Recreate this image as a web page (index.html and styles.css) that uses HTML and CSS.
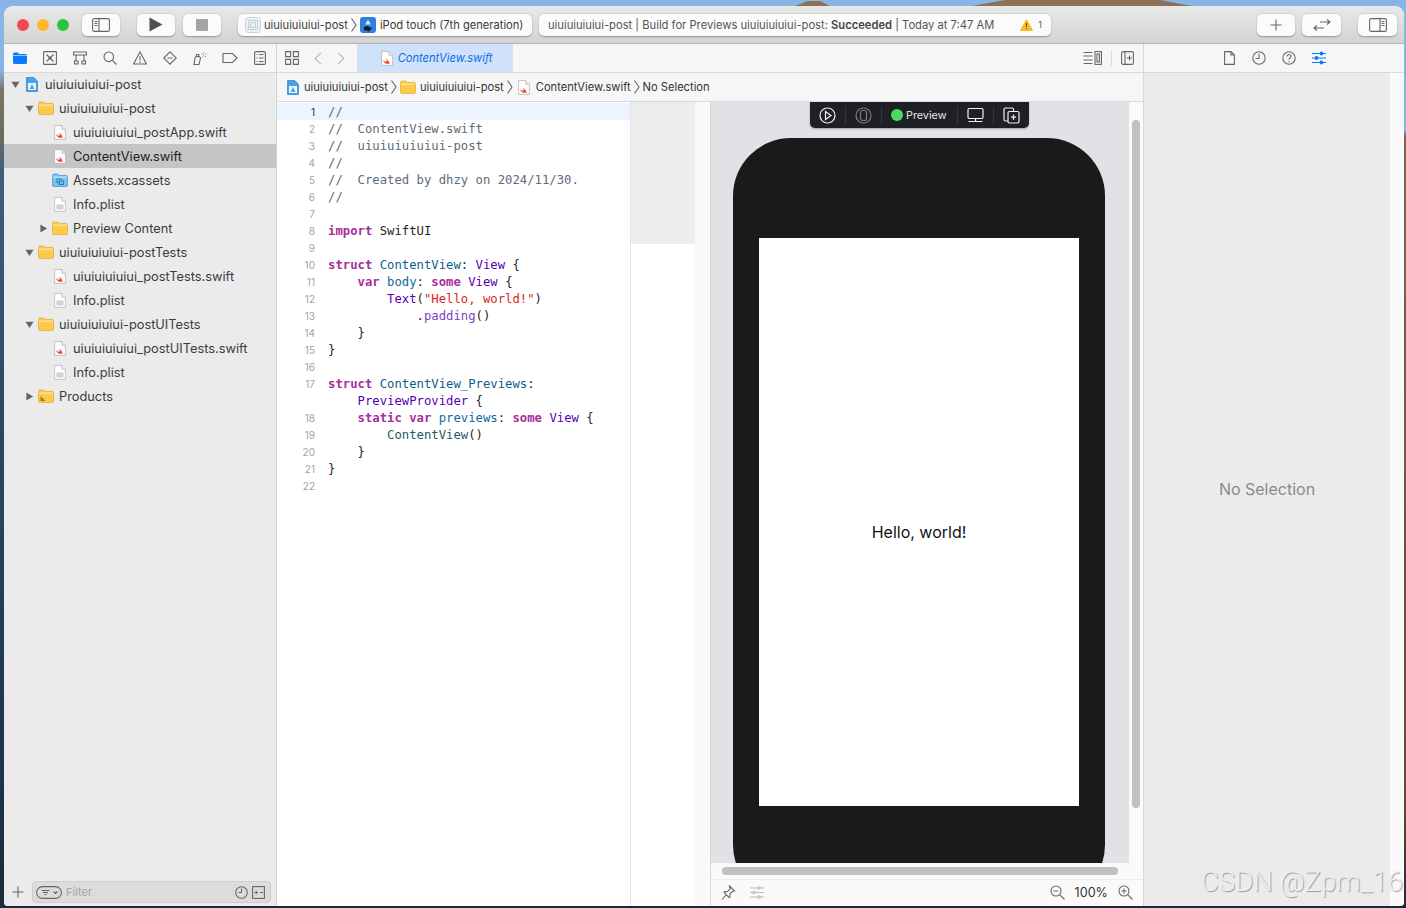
FILE: index.html
```html
<!DOCTYPE html>
<html lang="en">
<head>
    <meta charset="UTF-8">
    <title>ContentView.swift</title>
    <link rel="stylesheet" href="styles.css">
</head>
<body>
    <svg class="defs" width="0" height="0" aria-hidden="true">
        <symbol id="folder" viewBox="0 0 16 14">
            <path d="M.5 2.500A1.500 1.500 0 0 1 2 1h3.600l1.400 1.400h7A1.500 1.500 0 0 1 15.500 4v8.200a1.300 1.300 0 0 1-1.300 1.300H1.800a1.300 1.300 0 0 1-1.300-1.300z" fill="#fdcb4a" stroke="#e3a92e" stroke-width=".7"/>
            <path d="M1 3.400h14V5H1z" fill="#fbe08c"/>
        </symbol>
        <symbol id="folder-products" viewBox="0 0 16 14">
            <use href="#folder"/>
            <path d="M2.500 12V7l5 5z" fill="#a8761c"/>
        </symbol>
        <symbol id="folder-assets" viewBox="0 0 16 14">
            <path d="M.5 2.500A1.500 1.500 0 0 1 2 1h3.600l1.400 1.400h7A1.500 1.500 0 0 1 15.500 4v8.200a1.300 1.300 0 0 1-1.300 1.300H1.800a1.300 1.300 0 0 1-1.300-1.300z" fill="#74c3ee" stroke="#3d94cf" stroke-width=".7"/>
            <path d="M1 3.400h14V5H1z" fill="#b5e0f6"/>
            <rect x="5" y="6" width="4" height="3.600" fill="none" stroke="#1b6fb5" stroke-width=".8"/>
            <rect x="7.400" y="8" width="4" height="3.600" fill="#74c3ee" stroke="#1b6fb5" stroke-width=".8"/>
        </symbol>
        <symbol id="file-swift" viewBox="0 0 12 15">
            <path d="M.6.6h7.200l3.600 3.600v10.200H.6z" fill="#fff" stroke="#b5b5b5" stroke-width=".8"/>
            <path d="M7.800.6v3.600h3.600" fill="#eee" stroke="#b5b5b5" stroke-width=".8"/>
            <path d="M2 9.200c1.600 1.200 3 1.900 3.900 2-.7-.9-1.700-2-2.200-2.700 1.200 1 2.400 1.800 3 2.100C6 9.600 5.500 8.600 5 7.800c1.500 1 3 2.400 3.300 4 .5.300.8.700.9 1.100-.6-.5-1.100-.5-1.500-.3-1.500.6-4.400.2-5.700-3.400z" fill="#ee3a2b"/>
        </symbol>
        <symbol id="file-plist" viewBox="0 0 12 15">
            <path d="M.6.6h7.200l3.600 3.600v10.200H.6z" fill="#fff" stroke="#b9b9b9" stroke-width=".8"/>
            <path d="M7.800.6v3.600h3.600" fill="#eee" stroke="#b9b9b9" stroke-width=".8"/>
            <path d="M3 8h6v4H3zM3 10h6M5 8v4M7 8v4" fill="none" stroke="#b3b3b3" stroke-width=".7"/>
        </symbol>
        <symbol id="project" viewBox="0 0 12 15">
            <path d="M.6.6h7.200l3.600 3.600v10.200H.6z" fill="#4aa2ec" stroke="#2a7fd0" stroke-width=".8"/>
            <path d="M2 6h8v7H2z" fill="#e9f4fe"/>
            <path d="M6 7l2.400 5H3.600z" fill="#4aa2ec"/>
        </symbol>
        <symbol id="tri-down" viewBox="0 0 10 10"><path d="M.5 2h9L5 9z" fill="#666"/></symbol>
        <symbol id="tri-right" viewBox="0 0 10 10"><path d="M1.500.5v9L9 5z" fill="#666"/></symbol>
    </svg>

    <svg class="peaks" width="1406" height="6" viewBox="0 0 1406 6" aria-hidden="true">
        <path d="M795 6 808 1h12l10 5zM972 6l33-6h155l32 6z" fill="#8d7155"/>
    </svg>

    <div class="window">
        <header class="toolbar">
            <span class="light light-red"></span>
            <span class="light light-yellow"></span>
            <span class="light light-green"></span>

            <button class="tool-btn btn-sidebar" aria-label="Navigator">
                <svg width="18" height="14" viewBox="0 0 18 14" class="ico"><rect x=".6" y=".6" width="16.800" height="12.800" rx="1.500"/><path d="M7 .6v12.800M2.500 3.500h3M2.500 5.500h3M2.500 7.500h3"/></svg>
            </button>
            <button class="tool-btn btn-play" aria-label="Run">
                <svg width="14" height="15" viewBox="0 0 14 15"><path d="M.5.500 13.500 7.500.5 14.500z" fill="#4f4f4f"/></svg>
            </button>
            <button class="tool-btn btn-stop" aria-label="Stop"><span class="stop-square"></span></button>

            <div class="tool-box scheme">
                <svg width="16" height="16" viewBox="0 0 16 16"><rect x=".5" y=".5" width="15" height="15" rx="3" fill="#e9f1f2" stroke="#c9d4d6"/><rect x="3.500" y="3.500" width="9" height="9" fill="none" stroke="#c2d3d6"/><rect x="5.500" y="5.500" width="5" height="5" fill="none" stroke="#c2d3d6"/></svg>
                <span class="scheme-name">uiuiuiuiuiui-post</span>
                <svg class="ico chev" width="6" height="14" viewBox="0 0 6 14"><path d="M.5.500 5 7 .5 13.500"/></svg>
                <svg width="16" height="16" viewBox="0 0 16 16"><rect width="16" height="16" rx="3" fill="#2f7fe0"/><path d="M8 2.500l3 5H5z" fill="#cfe4fb"/><path d="M7 9l5 2-3 3.500-4-1.500-1 1V10z" fill="#1a1a1a"/></svg>
                <span class="scheme-device">iPod touch (7th generation)</span>
            </div>

            <div class="tool-box activity">
                <span class="activity-text">uiuiuiuiuiui-post | Build for Previews uiuiuiuiuiui-post: <b>Succeeded</b> | Today at 7:47 AM</span>
                <svg width="13" height="12" viewBox="0 0 13 12"><path d="M6.500.5 12.500 11.500H.5z" fill="#f6bd2a" stroke="#f6bd2a" stroke-linejoin="round"/><path d="M6.500 4v4M6.500 9.300v1" stroke="#6b4c00" stroke-width="1.100"/></svg>
                <span class="warn-count">1</span>
            </div>

            <button class="tool-btn btn-add" aria-label="Library">
                <svg class="ico" width="12" height="12" viewBox="0 0 12 12"><path d="M6 .5v11M.5 6h11"/></svg>
            </button>
            <button class="tool-btn btn-review" aria-label="Code review">
                <svg class="ico" width="18" height="14" viewBox="0 0 18 14"><path d="M1 10h10M4 7.500 1 10l3 2.500M7 4h10M14 1.500 17 4l-3 2.500"/></svg>
            </button>
            <button class="tool-btn btn-inspector" aria-label="Inspectors">
                <svg class="ico" width="18" height="14" viewBox="0 0 18 14"><rect x=".6" y=".6" width="16.800" height="12.800" rx="1.500"/><path d="M11 .6v12.800M12.500 3.500h3M12.500 5.500h3M12.500 7.500h3"/></svg>
            </button>
        </header>

        <div class="workspace">
            <aside class="navigator">
                <div class="nav-tabs">
                    <svg width="14" height="12" viewBox="0 0 14 12"><path d="M0 2a1.500 1.500 0 0 1 1.500-1.500h3.300L6 2h6.500A1.500 1.500 0 0 1 14 3.500v7a1.500 1.500 0 0 1-1.500 1.500h-11A1.500 1.500 0 0 1 0 10.500z" fill="#0a7aff"/><path d="M0 3.500h14" stroke="#f6f6f6" stroke-width=".6"/></svg>
                    <svg class="ico" width="14" height="14" viewBox="0 0 14 14"><rect x=".6" y=".6" width="12.800" height="12.800" rx=".5"/><path d="M3.500 3.500l7 7M10.500 3.500l-7 7"/><circle cx="7" cy="7" r="1" fill="#666"/></svg>
                    <svg class="ico" width="14" height="14" viewBox="0 0 14 14"><path d="M.6 1h12.800v3H.6zM3 4v6M11 4v6M1.500 10h3.500v3H1.500zM9 10h3.500v3H9z"/></svg>
                    <svg class="ico" width="14" height="14" viewBox="0 0 14 14"><circle cx="5.800" cy="5.800" r="4.800"/><path d="M9.300 9.300 13.500 13.500"/></svg>
                    <svg class="ico" width="14" height="14" viewBox="0 0 14 14"><path d="M7 1 13.500 13H.5zM7 5v4.500M7 10.500V12"/></svg>
                    <svg class="ico" width="14" height="14" viewBox="0 0 14 14"><path d="M7 .8 13.200 7 7 13.200.8 7zM4.500 7h5"/></svg>
                    <svg class="ico" width="14" height="14" viewBox="0 0 14 14"><path d="M3 5.500h3.500l1 1.500-1.500 6.500H1L2 7zM3.400 3.500h2.500v2H3.400z"/><path d="M8.500 3h.8M10.500 1.500h.8M10 4h.8M12.500 3h.8M9.500 6h.8M12 5.500h.8" stroke-width="1"/></svg>
                    <svg class="ico" width="16" height="14" viewBox="0 0 16 14"><path d="M1 2.500h9.500L15 7l-4.500 4.500H1z"/></svg>
                    <svg class="ico" width="12" height="14" viewBox="0 0 12 14"><rect x=".6" y=".6" width="10.800" height="12.800" rx="1.200"/><path d="M2.500 3.500h1M5 3.500h4.500M2.500 7h1M5 7h4.500M2.500 10.500h1M5 10.500h4.500"/></svg>
                </div>

                <div class="tree">
                    <div class="row depth-0"><svg class="tri"><use href="#tri-down"/></svg><svg class="file"><use href="#project"/></svg><span>uiuiuiuiuiui-post</span></div>
                    <div class="row depth-1"><svg class="tri"><use href="#tri-down"/></svg><svg class="dir"><use href="#folder"/></svg><span>uiuiuiuiuiui-post</span></div>
                    <div class="row depth-2"><i class="tri"></i><svg class="file"><use href="#file-swift"/></svg><span>uiuiuiuiuiui_postApp.swift</span></div>
                    <div class="row depth-2 selected"><i class="tri"></i><svg class="file"><use href="#file-swift"/></svg><span>ContentView.swift</span></div>
                    <div class="row depth-2"><i class="tri"></i><svg class="dir"><use href="#folder-assets"/></svg><span>Assets.xcassets</span></div>
                    <div class="row depth-2"><i class="tri"></i><svg class="file"><use href="#file-plist"/></svg><span>Info.plist</span></div>
                    <div class="row depth-2"><svg class="tri"><use href="#tri-right"/></svg><svg class="dir"><use href="#folder"/></svg><span>Preview Content</span></div>
                    <div class="row depth-1"><svg class="tri"><use href="#tri-down"/></svg><svg class="dir"><use href="#folder"/></svg><span>uiuiuiuiuiui-postTests</span></div>
                    <div class="row depth-2"><i class="tri"></i><svg class="file"><use href="#file-swift"/></svg><span>uiuiuiuiuiui_postTests.swift</span></div>
                    <div class="row depth-2"><i class="tri"></i><svg class="file"><use href="#file-plist"/></svg><span>Info.plist</span></div>
                    <div class="row depth-1"><svg class="tri"><use href="#tri-down"/></svg><svg class="dir"><use href="#folder"/></svg><span>uiuiuiuiuiui-postUITests</span></div>
                    <div class="row depth-2"><i class="tri"></i><svg class="file"><use href="#file-swift"/></svg><span>uiuiuiuiuiui_postUITests.swift</span></div>
                    <div class="row depth-2"><i class="tri"></i><svg class="file"><use href="#file-plist"/></svg><span>Info.plist</span></div>
                    <div class="row depth-1"><svg class="tri"><use href="#tri-right"/></svg><svg class="dir"><use href="#folder-products"/></svg><span>Products</span></div>
                </div>

                <div class="filter-bar">
                    <svg class="ico filter-add" width="12" height="12" viewBox="0 0 12 12"><path d="M6 .5v11M.5 6h11"/></svg>
                    <div class="filter-field">
                        <svg class="ico" width="26" height="13" viewBox="0 0 26 13"><rect x=".6" y=".6" width="24.800" height="11.800" rx="5.900"/><path d="M5.500 4.500h8M7 6.500h5M8.500 8.500h2M17.500 5.500 19.500 7.500 21.500 5.500"/></svg>
                        <span class="filter-label">Filter</span>
                        <svg class="ico" width="13" height="13" viewBox="0 0 13 13"><circle cx="6.500" cy="6.500" r="5.800"/><path d="M6.500 2.500v4H3.500"/></svg>
                        <svg class="ico" width="13" height="13" viewBox="0 0 13 13"><rect x=".6" y=".6" width="11.800" height="11.800"/><path d="M2.500 6.500h3.500M4.200 4.800v3.400M8 6.500h3"/></svg>
                    </div>
                </div>
            </aside>

            <main class="center">
                <div class="tab-bar">
                    <svg class="ico" width="14" height="14" viewBox="0 0 14 14"><path d="M.6.6h5v5h-5zM8.400.6h5v5h-5zM.6 8.400h5v5h-5zM8.400 8.400h5v5h-5z"/></svg>
                    <svg class="ico faint tab-back" width="8" height="13" viewBox="0 0 8 13"><path d="M7 .8 1 6.500 7 12.200"/></svg>
                    <svg class="ico faint tab-forward" width="8" height="13" viewBox="0 0 8 13"><path d="M1 .8 7 6.500 1 12.200"/></svg>
                    <div class="tab">
                        <svg class="file"><use href="#file-swift"/></svg>
                        <span>ContentView.swift</span>
                    </div>
                    <svg class="ico tab-right" width="19" height="14" viewBox="0 0 19 14"><path d="M.5 1.500h9M.5 5h9M.5 9h9M.5 12.500h9"/><rect x="12" y=".6" width="6.400" height="12.800"/><rect x="14" y="3" width="2.400" height="8"/></svg>
                    <span class="tab-sep"></span>
                    <svg class="ico" width="13" height="14" viewBox="0 0 13 14"><rect x=".6" y=".6" width="11.800" height="12.800" rx="1.500"/><path d="M4 .6v12.800M6 7h5M8.500 4.500v5"/></svg>
                </div>

                <div class="jump-bar">
                    <svg class="file"><use href="#project"/></svg>
                    <span class="crumb">uiuiuiuiuiui-post</span>
                    <svg class="ico chev" width="6" height="14" viewBox="0 0 6 14"><path d="M.5.500 5 7 .5 13.500"/></svg>
                    <svg class="dir"><use href="#folder"/></svg>
                    <span class="crumb crumb-dir">uiuiuiuiuiui-post</span>
                    <svg class="ico chev" width="6" height="14" viewBox="0 0 6 14"><path d="M.5.500 5 7 .5 13.500"/></svg>
                    <svg class="file"><use href="#file-swift"/></svg>
                    <span class="crumb crumb-file">ContentView.swift</span>
                    <svg class="ico chev" width="6" height="14" viewBox="0 0 6 14"><path d="M.5.500 5 7 .5 13.500"/></svg>
                    <span class="crumb">No Selection</span>
                </div>

                <div class="split">
                    <section class="code">
                        <div class="line active"><span class="ln">1</span><span class="cm">//</span></div>
                        <div class="line"><span class="ln">2</span><span class="cm">//  ContentView.swift</span></div>
                        <div class="line"><span class="ln">3</span><span class="cm">//  uiuiuiuiuiui-post</span></div>
                        <div class="line"><span class="ln">4</span><span class="cm">//</span></div>
                        <div class="line"><span class="ln">5</span><span class="cm">//  Created by dhzy on 2024/11/30.</span></div>
                        <div class="line"><span class="ln">6</span><span class="cm">//</span></div>
                        <div class="line"><span class="ln">7</span></div>
                        <div class="line"><span class="ln">8</span><span><span class="kw">import</span> SwiftUI</span></div>
                        <div class="line"><span class="ln">9</span></div>
                        <div class="line"><span class="ln">10</span><span><span class="kw">struct</span> <span class="decl">ContentView</span>: <span class="ty">View</span> {</span></div>
                        <div class="line"><span class="ln">11</span><span>    <span class="kw">var</span> <span class="decl2">body</span>: <span class="kw">some</span> <span class="ty">View</span> {</span></div>
                        <div class="line"><span class="ln">12</span><span>        <span class="ty">Text</span>(<span class="str">"Hello, world!"</span>)</span></div>
                        <div class="line"><span class="ln">13</span><span>            .<span class="fn">padding</span>()</span></div>
                        <div class="line"><span class="ln">14</span><span>    }</span></div>
                        <div class="line"><span class="ln">15</span><span>}</span></div>
                        <div class="line"><span class="ln">16</span></div>
                        <div class="line"><span class="ln">17</span><span><span class="kw">struct</span> <span class="decl">ContentView_Previews</span>:</span></div>
                        <div class="line"><span class="ln"></span><span>    <span class="ty">PreviewProvider</span> {</span></div>
                        <div class="line"><span class="ln">18</span><span>    <span class="kw">static</span> <span class="kw">var</span> <span class="decl2">previews</span>: <span class="kw">some</span> <span class="ty">View</span> {</span></div>
                        <div class="line"><span class="ln">19</span><span>        <span class="call">ContentView</span>()</span></div>
                        <div class="line"><span class="ln">20</span><span>    }</span></div>
                        <div class="line"><span class="ln">21</span><span>}</span></div>
                        <div class="line"><span class="ln">22</span></div>
                    </section>

                    <div class="minimap"><div class="minimap-view"></div></div>

                    <section class="preview">
                        <div class="preview-main">
                            <div class="canvas">
                                <div class="preview-pill">
                                    <svg class="pill-ico" width="17" height="17" viewBox="0 0 17 17"><circle cx="8.500" cy="8.500" r="7.500"/><path d="M6.500 4.500 12 8.500 6.500 12.500z"/></svg>
                                    <span class="pill-sep"></span>
                                    <svg class="pill-ico dim" width="17" height="17" viewBox="0 0 17 17"><circle cx="8.500" cy="8.500" r="7.500"/><rect x="5.500" y="3.500" width="6" height="10" rx="2"/></svg>
                                    <span class="pill-sep"></span>
                                    <span class="pill-dot"></span>
                                    <span class="pill-label">Preview</span>
                                    <span class="pill-sep"></span>
                                    <svg class="pill-ico" width="17" height="17" viewBox="0 0 17 17"><rect x="1" y="1.500" width="15" height="10" rx="1.200"/><path d="M8.500 11.500v3M1.500 14.500h14"/></svg>
                                    <span class="pill-sep"></span>
                                    <svg class="pill-ico" width="17" height="17" viewBox="0 0 17 17"><rect x="1" y="1" width="9.500" height="13" rx="1.500"/><rect x="5" y="4.500" width="11" height="11.500" rx="1.500" fill="#1e2025"/><path d="M10.500 7.500v5.500M8 10.200h5"/></svg>
                                </div>
                                <div class="device">
                                    <div class="screen">Hello, world!</div>
                                </div>
                            </div>
                            <div class="v-track"><div class="v-thumb"></div></div>
                        </div>
                        <div class="h-track"><div class="h-thumb"></div></div>
                        <div class="preview-footer">
                            <svg class="ico" width="15" height="15" viewBox="0 0 15 15"><path d="M8.500 1l5 5-2.200.5-2.500 2.500.2 3-1 .5L3 7.500l.5-1 3 .2L9 4zM5 10l-4 4.500"/></svg>
                            <svg class="ico faint sliders" width="14" height="13" viewBox="0 0 14 13"><path d="M0 2h14M0 6.500h14M0 11h14"/><circle cx="9" cy="2" r="1.200" fill="#fafafa"/><circle cx="4" cy="6.500" r="1.200" fill="#fafafa"/><circle cx="9" cy="11" r="1.200" fill="#fafafa"/></svg>
                            <svg class="ico zoom-out" width="15" height="15" viewBox="0 0 15 15"><circle cx="6" cy="6" r="5"/><path d="M9.700 9.700 14.500 14.500M3.500 6h5"/></svg>
                            <span class="zoom-value">100%</span>
                            <svg class="ico" width="15" height="15" viewBox="0 0 15 15"><circle cx="6" cy="6" r="5"/><path d="M9.700 9.700 14.500 14.500M3.500 6h5M6 3.500v5"/></svg>
                        </div>
                    </section>
                </div>
            </main>

            <aside class="inspector">
                <div class="inspector-tabs">
                    <svg class="ico" width="11" height="14" viewBox="0 0 11 14"><path d="M.6.6h6.400l3.400 3.400v9.400H.6zM7 .6V4h3.400"/></svg>
                    <svg class="ico" width="14" height="14" viewBox="0 0 14 14"><circle cx="7" cy="7" r="6.200"/><path d="M7 2.800V7.500H3.500"/></svg>
                    <svg class="ico" width="14" height="14" viewBox="0 0 14 14"><circle cx="7" cy="7" r="6.200"/><path d="M5 5.500a2 2 0 1 1 3 1.700c-.7.400-1 .8-1 1.600M7 10v1.200"/></svg>
                    <svg class="ico-blue" width="14" height="14" viewBox="0 0 14 14"><path d="M0 2.500h14M0 7h14M0 11.500h14"/><circle cx="9.500" cy="2.500" r="1.300"/><circle cx="4.500" cy="7" r="1.300"/><circle cx="9.500" cy="11.500" r="1.300"/></svg>
                </div>
                <div class="inspector-body">
                    <div class="inspector-pane">No Selection</div>
                    <div class="inspector-strip"></div>
                </div>
            </aside>
        </div>
    </div>

    <div class="watermark">CSDN @Zpm_16</div>
</body>
</html>
```

FILE: styles.css
```css
* {
    margin: 0;
    padding: 0;
    box-sizing: border-box;
}

html, body {
    width: 1406px;
    height: 908px;
    overflow: hidden;
}

body {
    position: relative;
    padding: 6px 2px 2px 4px;
    font-family: Inter, Roboto, 'Liberation Sans', sans-serif;
    color: #3a3a3a;
    background:
        linear-gradient(180deg, #86b5e6 130px, #7a6650 136px, #5b4c3c 800px, #26282c 100%) right / 2px 100% no-repeat,
        linear-gradient(180deg, #86b5e6 0, #86b5e6 70px, #7c7466 90px, #6d6a60 140px, #3f5f80 170px, #2b4a68 400px, #1c3248 800px, #1c2a38 100%);
}

.defs {
    position: absolute;
}

.peaks {
    position: absolute;
    top: 0;
    left: 0;
}

svg {
    display: block;
    flex-shrink: 0;
}

.ico {
    fill: none;
    stroke: #666;
    stroke-width: 1.1;
}

.ico.faint {
    stroke: #b8b8b8;
}

.ico-blue {
    fill: #0a7aff;
    stroke: #0a7aff;
    stroke-width: 1.2;
}

.file {
    width: 12px;
    height: 15px;
}

.dir {
    width: 16px;
    height: 14px;
}

.window {
    position: relative;
    display: flex;
    flex-direction: column;
    width: 1400px;
    height: 900px;
    border-radius: 9px 9px 4px 4px;
    overflow: hidden;
    background: #f6f6f6;
}

/* toolbar */
.toolbar {
    display: flex;
    align-items: center;
    flex-shrink: 0;
    height: 38px;
    padding: 0 7px 0 13px;
    background: linear-gradient(180deg, #e9e9e9, #d3d3d3);
    border-bottom: 1px solid #b4b4b4;
}

.light {
    width: 12px;
    height: 12px;
    margin-right: 8px;
    border-radius: 50%;
}

.light-red { background: #f4474e; }
.light-yellow { background: #fcb72a; }
.light-green { background: #2ac43f; }

.tool-btn,
.tool-box {
    display: flex;
    align-items: center;
    height: 22px;
    border: none;
    border-radius: 5px;
    background: #fbfbfb;
    box-shadow: 0 .5px 1.5px rgba(0, 0, 0, .3);
}

.tool-btn {
    justify-content: center;
    width: 38px;
}

.btn-sidebar { margin-left: 5px; }
.btn-play { margin-left: 17px; }
.btn-stop { margin-left: 8px; }

.stop-square {
    width: 12px;
    height: 12px;
    border-radius: 1px;
    background: #a3a3a3;
}

.scheme {
    width: 294px;
    margin-left: 17px;
    padding-left: 7px;
    font-size: 11.15px;
}

.scheme-name { margin-left: 3px; }
.scheme .chev { margin: 0 3px 0 3px; }
.scheme-device { margin-left: 4px; }

.activity {
    width: 512px;
    margin-left: 7px;
    padding: 0 9px 0 9px;
    font-size: 11.2px;
    color: #555;
}

.activity b {
    font-weight: 600;
    color: #444;
}

.activity-text {
    flex: 1;
}

.warn-count {
    margin-left: 5px;
    font-size: 9px;
}

.btn-add { margin-left: 206px; }
.btn-review { margin-left: 7px; width: 39px; }
.btn-inspector { margin-left: 17px; width: 39px; }

/* left column */
.workspace {
    display: flex;
    flex: 1;
    min-height: 0;
}

.navigator {
    display: flex;
    flex-direction: column;
    width: 273px;
    background: #ebebeb;
    border-right: 1px solid #d4d4d4;
}

.nav-tabs {
    display: grid;
    grid-template-columns: repeat(9, 30px);
    justify-items: center;
    align-items: center;
    height: 29px;
    padding-left: 1px;
    background: #f6f6f6;
    border-bottom: 1px solid #d9d9d9;
}

.tree {
    flex: 1;
    margin-top: -1px;
}

.row {
    display: flex;
    align-items: center;
    height: 24px;
    font-size: 12.8px;
    color: #3c3c3c;
    white-space: nowrap;
}

.row.selected {
    background: #c5c5c5;
    color: #222;
}

.depth-0 { padding-left: 7px; }
.depth-1 { padding-left: 21px; }
.depth-2 { padding-left: 35px; }

.tri {
    display: block;
    width: 9px;
    height: 9px;
    flex-shrink: 0;
}

.row .file {
    margin-left: 6px;
    margin-right: 7px;
}

.row .dir {
    margin-left: 4px;
    margin-right: 5px;
}

.filter-bar {
    display: flex;
    align-items: flex-end;
    gap: 8px;
    height: 28px;
    padding: 0 5px 3px 8px;
    flex-shrink: 0;
}

.filter-add {
    margin-bottom: 5px;
}

.filter-field {
    display: flex;
    align-items: center;
    flex: 1;
    height: 22px;
    padding: 0 5px 0 3px;
    background: #dcdcdc;
    border: 1px solid #cdcdcd;
    border-radius: 4px;
}

.filter-label {
    flex: 1;
    margin-left: 4px;
    font-size: 11px;
    color: #a6a6a6;
}

.filter-field svg:last-child {
    margin-left: 4px;
}

/* centre column */
.center {
    display: flex;
    flex-direction: column;
    width: 867px;
    border-right: 1px solid #d9d9d9;
}

.tab-bar {
    display: flex;
    align-items: center;
    height: 29px;
    flex-shrink: 0;
    padding-left: 8px;
    border-bottom: 1px solid #d9d9d9;
}

.tab-back { margin-left: 15px; }
.tab-forward { margin-left: 15px; }

.tab {
    display: flex;
    align-items: center;
    justify-content: center;
    gap: 5px;
    align-self: stretch;
    width: 156px;
    margin-left: 12px;
    padding-left: 3px;
    background: #cfe2fa;
    font-size: 11.15px;
    font-style: italic;
    color: #0a6fe8;
}

.tab-right { margin-left: 570px; }

.tab-sep {
    width: 1px;
    height: 16px;
    margin: 0 9px;
    background: #dcdcdc;
}

.jump-bar {
    display: flex;
    align-items: center;
    height: 29px;
    flex-shrink: 0;
    padding-left: 10px;
    font-size: 11.15px;
    color: #333;
    border-bottom: 1px solid #d9d9d9;
}

.crumb {
    margin-left: 5px;
}

.crumb-dir {
    margin-left: 4px;
}

.crumb-file {
    margin-left: 6px;
}

.jump-bar .chev {
    margin: 0 3px 0 3px;
}

.jump-bar .chev + .file {
    margin-left: 2px;
}

.jump-bar .chev + .crumb {
    margin-left: 0;
}

.split {
    display: flex;
    flex: 1;
    min-height: 0;
    background: #fafafa;
}

.code {
    width: 354px;
    padding-top: 1px;
    background: #fff;
    border-right: 1px solid #e4e4e4;
    font-family: 'DejaVu Sans Mono', 'Liberation Mono', monospace;
    font-size: 12.25px;
    color: #262626;
}

.line {
    display: flex;
    height: 17px;
    line-height: 19px;
    white-space: pre;
}

.line.active {
    background: #ecf5ff;
}

.line.active .ln {
    color: #333;
}

.ln {
    width: 38px;
    margin-right: 13px;
    flex-shrink: 0;
    font-family: Inter, Roboto, sans-serif;
    font-size: 10px;
    text-align: right;
    color: #a3a3a3;
}

.cm { color: #5d6c79; }
.kw { color: #a82e9c; font-weight: 700; }
.decl { color: #0b5e8a; }
.decl2 { color: #0f68a0; }
.ty { color: #5500b5; }
.str { color: #d8261c; }
.fn { color: #7d3fc4; }
.call { color: #1f5a60; }

.minimap {
    width: 64px;
    background: #fff;
}

.minimap-view {
    height: 142px;
    background: #ededed;
    border-top: 2px solid #e4edf6;
}

.preview {
    display: flex;
    flex-direction: column;
    flex: 1;
    min-width: 0;
    margin-left: 15px;
    background: #fafafa;
    border-left: 1px solid #d6d6d6;
}

.preview-main {
    display: flex;
    flex: 1;
    min-height: 0;
}

.canvas {
    position: relative;
    flex: 1;
    padding-top: 36px;
    overflow: hidden;
    background: #e1e2e6;
}

.preview-pill {
    position: absolute;
    top: 0;
    left: 99px;
    display: flex;
    align-items: center;
    gap: 9px;
    width: 219px;
    height: 26px;
    padding: 0 9px;
    background: #1e2025;
    border-radius: 0 0 5px 5px;
    box-shadow: 0 1px 2px rgba(0, 0, 0, .3);
}

.pill-ico {
    fill: none;
    stroke: #f0f0f0;
    stroke-width: 1.2;
}

.pill-ico.dim {
    stroke: #77797d;
}

.pill-sep {
    width: 1px;
    height: 18px;
    background: #34363b;
    flex-shrink: 0;
}

.pill-dot {
    width: 12px;
    height: 12px;
    border-radius: 50%;
    background: #4cd964;
    flex-shrink: 0;
}

.pill-label {
    margin: 0 2px 0 -6px;
    font-size: 10.8px;
    color: #e6e6e6;
}

.device {
    width: 372px;
    height: 765px;
    margin-left: 22px;
    padding: 100px 26px 0;
    background: #1a1a1a;
    border-radius: 58px;
}

.screen {
    display: flex;
    align-items: center;
    justify-content: center;
    height: 568px;
    padding-top: 20px;
    background: #fff;
    font-size: 16px;
    color: #111;
}

.v-track {
    width: 14px;
    padding: 18px 3px 0;
}

.v-thumb {
    height: 688px;
    border-radius: 4px;
    background: #c1c1c1;
}

.h-track {
    height: 17px;
    flex-shrink: 0;
    padding: 4px 25px 0 11px;
    border-bottom: 1px solid #ececec;
}

.h-thumb {
    height: 8px;
    border-radius: 4px;
    background: #c1c1c1;
}

.preview-footer {
    display: flex;
    align-items: center;
    height: 26px;
    flex-shrink: 0;
    padding: 0 10px 1px;
    gap: 10px;
    font-size: 12.6px;
}

.sliders {
    margin-left: 4px;
}

.zoom-out {
    margin-left: auto;
}

.zoom-value {
    color: #333;
}

/* right column */
.inspector {
    display: flex;
    flex-direction: column;
    flex: 1;
}

.inspector-tabs {
    display: grid;
    grid-template-columns: repeat(4, 30px);
    justify-items: center;
    align-items: center;
    height: 29px;
    flex-shrink: 0;
    padding-left: 70px;
    border-bottom: 1px solid #d9d9d9;
}

.inspector-body {
    display: flex;
    flex: 1;
}

.inspector-pane {
    display: flex;
    align-items: center;
    justify-content: center;
    flex: 1;
    padding-bottom: 1px;
    background: #ebebeb;
    font-size: 16px;
    color: #8a8a8a;
}

.inspector-strip {
    width: 14px;
    background: #fafafa;
}

.watermark {
    position: absolute;
    top: 865px;
    left: 1201px;
    font-family: Roboto, sans-serif;
    font-size: 27.5px;
    font-weight: 300;
    white-space: nowrap;
    color: #efefef;
    text-shadow: 1px 1px 1px rgba(0, 0, 0, .35);
}
```
